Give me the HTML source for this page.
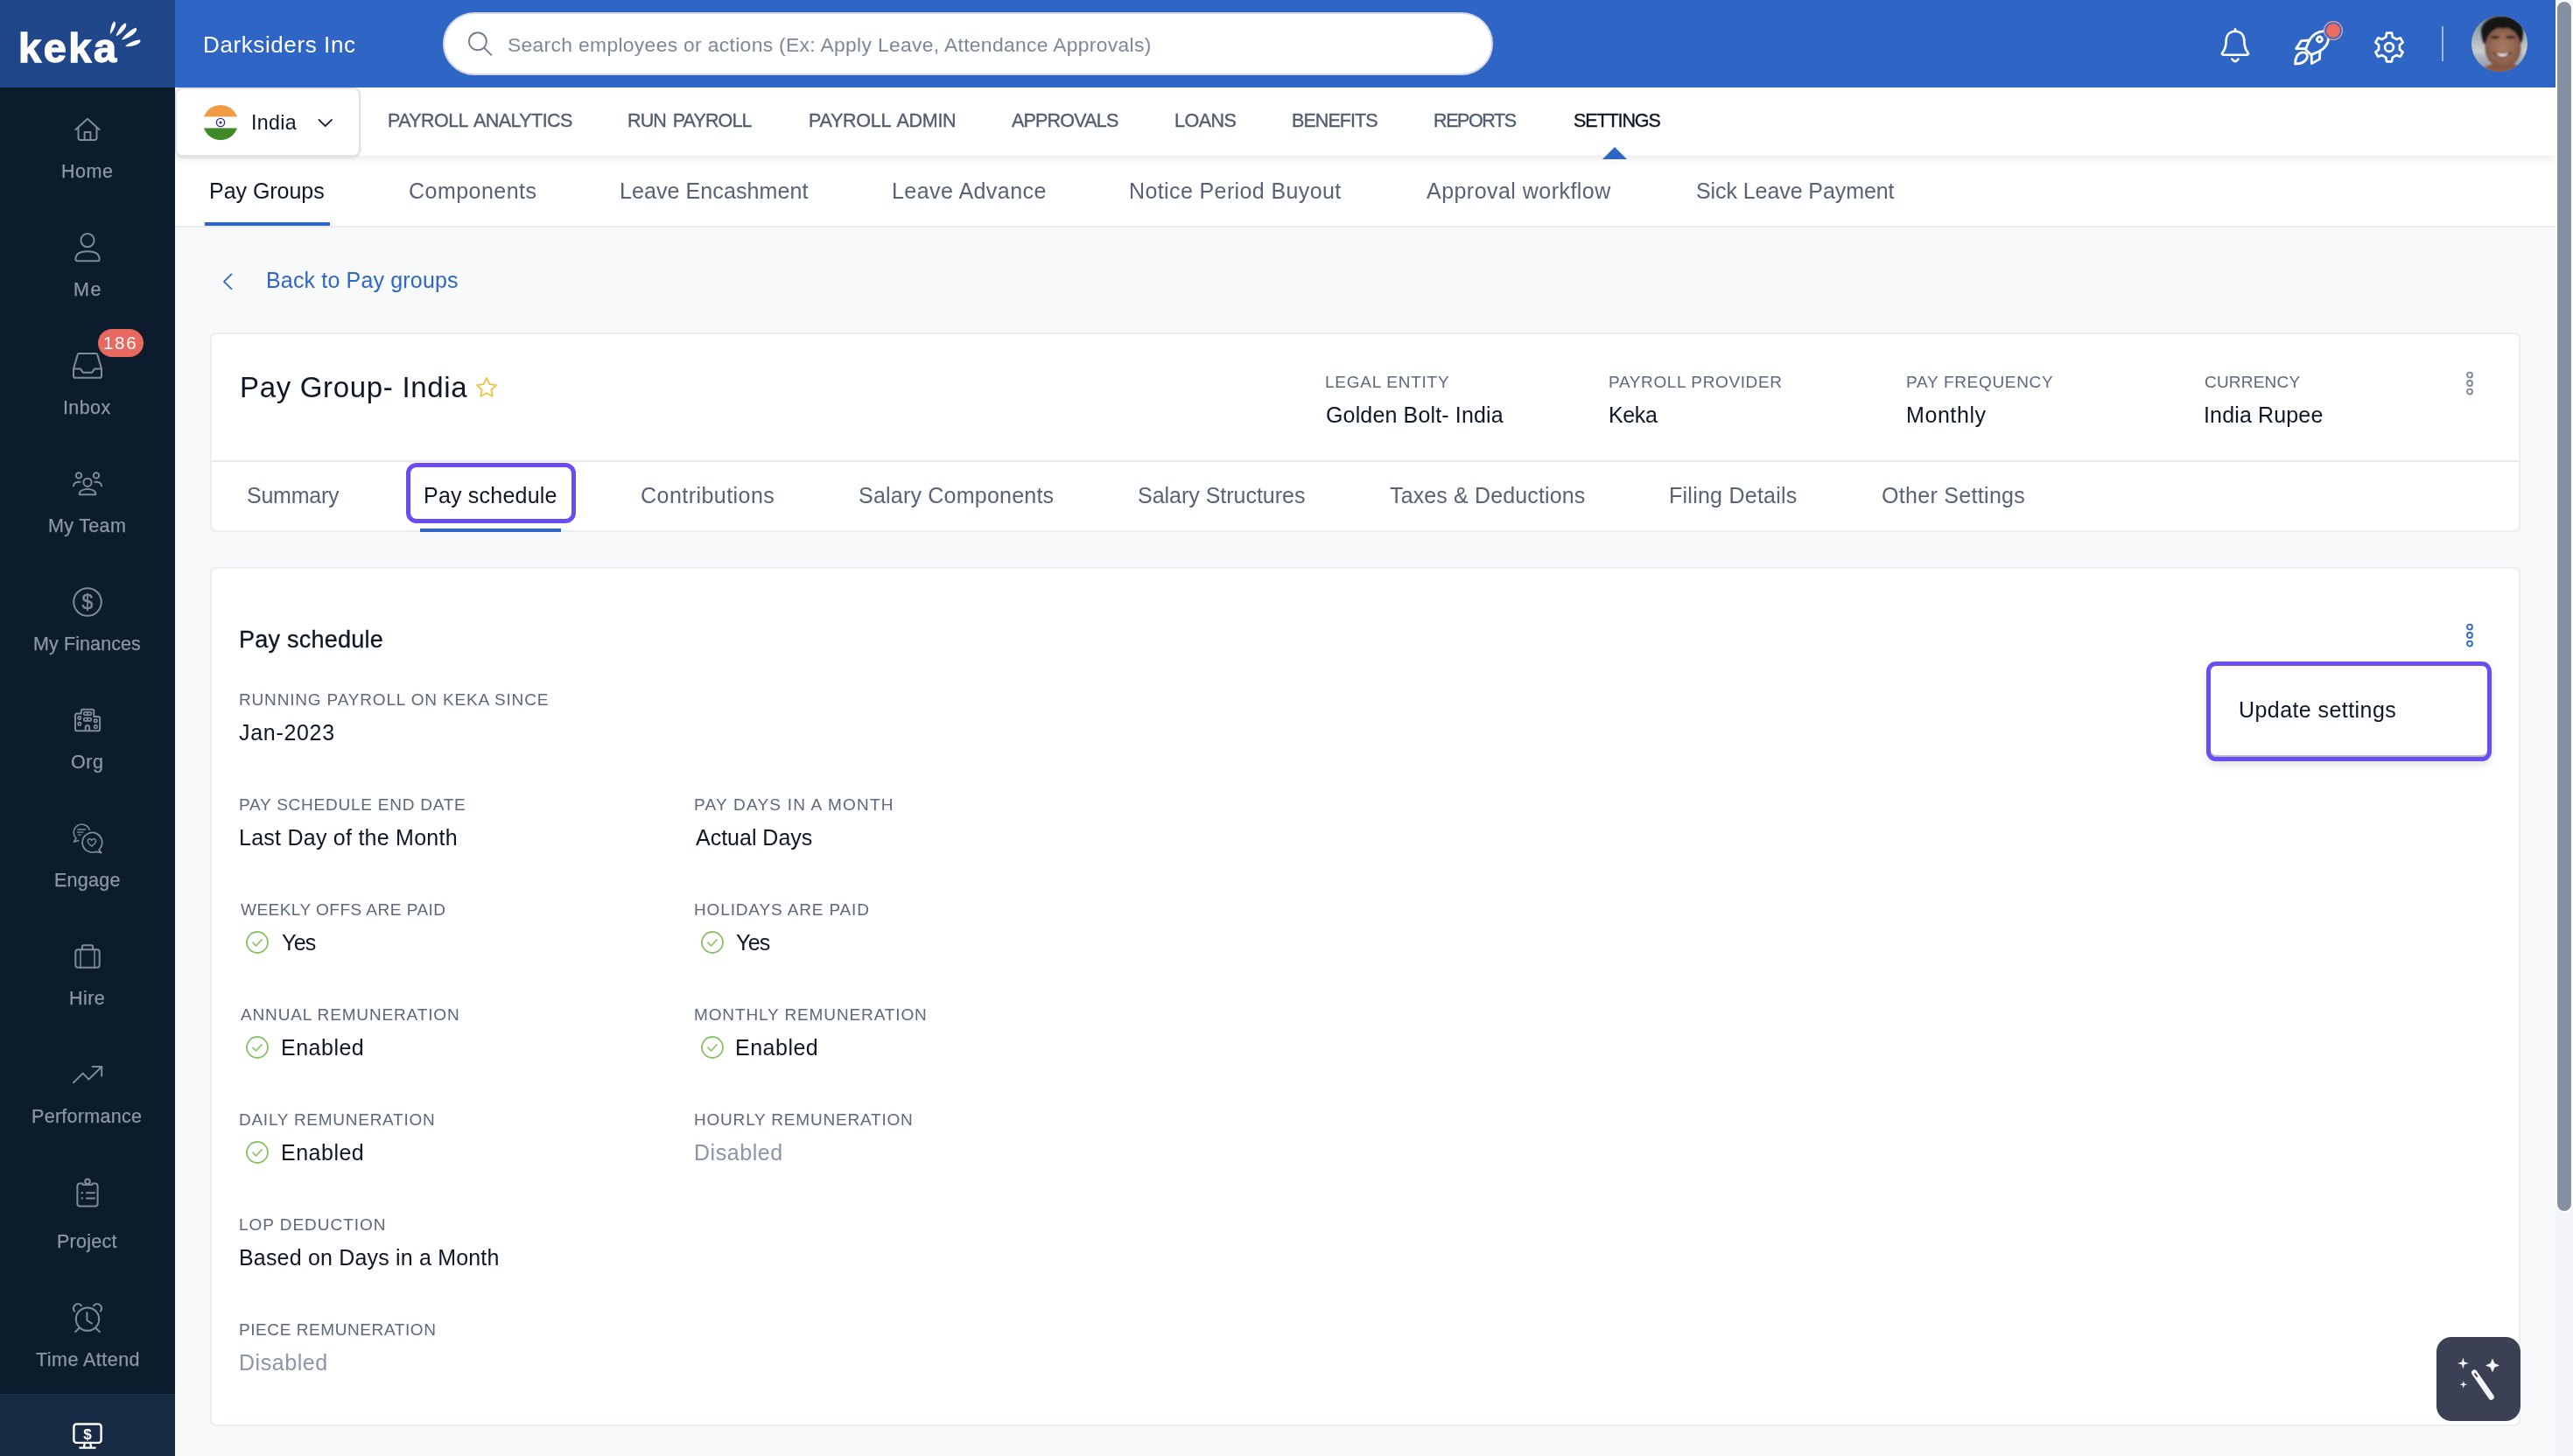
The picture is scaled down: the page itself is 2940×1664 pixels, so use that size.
<!DOCTYPE html>
<html lang="en"><head><meta charset="utf-8"><title>Keka - Pay Group India - Pay schedule</title>
<style>
*{box-sizing:border-box;margin:0;padding:0}
h1,h2{font-weight:400;font-size:inherit}
a{text-decoration:none;color:inherit}
html,body{width:2940px;height:1664px;overflow:hidden}
body{background:#f8f9fb;font-family:"Liberation Sans",sans-serif;position:relative;color:#0f1726}
@media (max-width:2000px){html{zoom:.5}}
.t{position:absolute;white-space:pre;display:block;will-change:transform}
.ic{position:absolute;display:block;will-change:transform}
.ic svg{display:block;width:100%;height:100%;overflow:visible}
.abs{position:absolute}
.sidebar{left:0;top:0;width:200px;height:1664px;background:#0d1c2c}
.logo-wrap{left:0;top:0;width:200px;height:100px;background:#20478a}
.nv{-webkit-text-stroke:0.35px currentColor}
.sd{-webkit-text-stroke:0.25px currentColor}
.hd{-webkit-text-stroke:0.3px currentColor}
.logo{-webkit-text-stroke:1.3px #fff}
.side-active{left:0;top:1593px;width:200px;height:71px;background:#182b45}
.badge{left:112px;top:376px;width:52px;height:32px;border-radius:16px;background:#e9685f}
.topbar{left:200px;top:0;width:2720px;height:100px;background:#2f66c6}
.search{left:306px;top:14px;width:1200px;height:72px;border-radius:36px;background:#fff;border:2px solid #d3d8e6}
.mainnav{left:200px;top:100px;width:2720px;height:78px;background:#fff;box-shadow:0 3px 10px rgba(10,15,25,.09)}
.country{left:-0.5px;top:-0.5px;width:212.5px;height:79.7px;background:#fff;border:2px solid #dfe2e8;border-radius:8px;box-shadow:0 1px 4px rgba(20,30,50,.10)}
.subtabs{left:200px;top:178px;width:2720px;height:82px;background:#fff;border-bottom:2px solid #e9ebee}
.uline{background:#2f66c6}
.card{background:#fff;border:2px solid #ebedf0;border-radius:7px}
.hl{border:5px solid #694df3;border-radius:12px;background:#fff}
.sb-track{left:2920px;top:0;width:20px;height:1664px;background:#f3f4f8}
.sb-thumb{left:0;top:0;width:20px;height:1386px;border:2px solid #fff;border-radius:10px;background:#8790a0}
.fab{left:2784px;top:1528px;width:96px;height:96px;border-radius:17px;background:#3b4054}
</style></head><body>

<main>
<div class="ic" style="left:254px;top:312px;width:12px;height:20px;"><svg viewBox="254 312 12 20" fill="none" stroke="#2f66c6" stroke-width="1.8" stroke-linecap="round" stroke-linejoin="round" ><path d="M264.4 313.4 L256 321.8 L264.4 330.2"/></svg></div>
<a class="backlink"><span class="t " style="left:303.5px;top:306px;font-size:25px;line-height:28px;letter-spacing:0.16px;color:#2f66c6;">Back to Pay groups</span></a>
<section class="abs card" style="left:240px;top:380px;width:2640px;height:228px">
<h1><span class="t " style="left:32.0px;top:42px;font-size:33px;line-height:37px;letter-spacing:0.68px;color:#0f1726;">Pay Group- India</span></h1>
<div class="ic" style="left:301.5px;top:47.80000000000001px;width:24px;height:23px;"><svg viewBox="543 430 25 24" fill="none" stroke="#efbf3e" stroke-width="1.8" stroke-linecap="round" stroke-linejoin="round" ><path d="M555.5 432 L559 439.6 L567 440.6 L561 446.2 L562.6 454 L555.5 450 L548.4 454 L550 446.2 L544 440.6 L552 439.6 Z"/></svg></div>
<span class="t " style="left:1271.5px;top:44px;font-size:19px;line-height:21px;letter-spacing:0.75px;color:#5d687a;">LEGAL ENTITY</span>
<span class="t " style="left:1272.5px;top:78px;font-size:25px;line-height:28px;letter-spacing:0.15px;color:#0f1726;">Golden Bolt- India</span>
<span class="t " style="left:1595.5px;top:44px;font-size:19px;line-height:21px;letter-spacing:0.62px;color:#5d687a;">PAYROLL PROVIDER</span>
<span class="t " style="left:1595.5px;top:78px;font-size:25px;line-height:28px;letter-spacing:-0.37px;color:#0f1726;">Keka</span>
<span class="t " style="left:1935.5px;top:44px;font-size:19px;line-height:21px;letter-spacing:0.69px;color:#5d687a;">PAY FREQUENCY</span>
<span class="t " style="left:1935.5px;top:78px;font-size:25px;line-height:28px;letter-spacing:0.58px;color:#0f1726;">Monthly</span>
<span class="t " style="left:2276.5px;top:44px;font-size:19px;line-height:21px;letter-spacing:0.21px;color:#5d687a;">CURRENCY</span>
<span class="t " style="left:2275.5px;top:78px;font-size:25px;line-height:28px;letter-spacing:0.15px;color:#0f1726;">India Rupee</span>
<div class="ic" style="left:2575px;top:42px;width:10px;height:28px;"><svg viewBox="0 0 10 28" fill="none" stroke="#7a8597" stroke-width="1.8" stroke-linecap="round" stroke-linejoin="round" ><circle cx="5" cy="4.6" r="3"/><circle cx="5" cy="14" r="3"/><circle cx="5" cy="23.6" r="3"/></svg></div>
<div class="abs" style="left:0;top:144px;width:2636px;height:2px;background:#e9ebef"></div>
<div class="abs hl" style="left:222px;top:147px;width:194px;height:69px"></div>
<span class="t " style="left:39.9px;top:170px;font-size:25px;line-height:28px;letter-spacing:-0.23px;color:#586375;">Summary</span>
<span class="t " style="left:241.5px;top:170px;font-size:25px;line-height:28px;letter-spacing:0.21px;color:#0f1726;">Pay schedule</span>
<span class="t " style="left:490.0px;top:170px;font-size:25px;line-height:28px;letter-spacing:0.46px;color:#586375;">Contributions</span>
<span class="t " style="left:738.5px;top:170px;font-size:25px;line-height:28px;letter-spacing:0.22px;color:#586375;">Salary Components</span>
<span class="t " style="left:1057.5px;top:170px;font-size:25px;line-height:28px;letter-spacing:-0.02px;color:#586375;">Salary Structures</span>
<span class="t " style="left:1346.1px;top:170px;font-size:25px;line-height:28px;letter-spacing:0.14px;color:#586375;">Taxes &amp; Deductions</span>
<span class="t " style="left:1665.0px;top:170px;font-size:25px;line-height:28px;letter-spacing:0.25px;color:#586375;">Filing Details</span>
<span class="t " style="left:1907.5px;top:170px;font-size:25px;line-height:28px;letter-spacing:0.31px;color:#586375;">Other Settings</span>
<div class="abs uline" style="left:238px;top:222px;width:161px;height:4px"></div>
</section>
<section class="abs card" style="left:240px;top:648px;width:2640px;height:982px">
<h2><span class="t hd" style="left:31.2px;top:66px;font-size:27px;line-height:30px;letter-spacing:0.25px;color:#0f1726;">Pay schedule</span></h2>
<div class="ic" style="left:2575px;top:62px;width:10px;height:28px;"><svg viewBox="0 0 10 28" fill="none" stroke="#2f66c6" stroke-width="1.8" stroke-linecap="round" stroke-linejoin="round" ><circle cx="5" cy="4.6" r="3"/><circle cx="5" cy="14" r="3"/><circle cx="5" cy="23.6" r="3"/></svg></div>
<div class="abs hl" style="left:2279px;top:106px;width:326px;height:114px;border-radius:11px;box-shadow:inset 0 -2px 1px rgba(80,80,95,.4),0 4px 10px rgba(20,30,60,.13)"></div>
<span class="t " style="left:2316.0px;top:147px;font-size:25px;line-height:28px;letter-spacing:0.43px;color:#0f1726;">Update settings</span>
<span class="t " style="left:31.2px;top:139px;font-size:19px;line-height:21px;letter-spacing:0.83px;color:#5d687a;">RUNNING PAYROLL ON KEKA SINCE</span>
<span class="t " style="left:31.3px;top:173px;font-size:25px;line-height:28px;letter-spacing:0.69px;color:#0f1726;">Jan-2023</span>
<span class="t " style="left:31.2px;top:259px;font-size:19px;line-height:21px;letter-spacing:0.76px;color:#5d687a;">PAY SCHEDULE END DATE</span>
<span class="t " style="left:31.2px;top:293px;font-size:25px;line-height:28px;letter-spacing:0.25px;color:#0f1726;">Last Day of the Month</span>
<span class="t " style="left:550.8px;top:259px;font-size:19px;line-height:21px;letter-spacing:1.22px;color:#5d687a;">PAY DAYS IN A MONTH</span>
<span class="t " style="left:552.8px;top:293px;font-size:25px;line-height:28px;letter-spacing:-0.01px;color:#0f1726;">Actual Days</span>
<span class="t " style="left:33.2px;top:379px;font-size:19px;line-height:21px;letter-spacing:0.48px;color:#5d687a;">WEEKLY OFFS ARE PAID</span>
<div class="ic" style="left:39.0px;top:414.0px;width:26px;height:26px;"><svg viewBox="0 0 26 26" fill="none" stroke="#88c269" stroke-width="1.8" stroke-linecap="round" stroke-linejoin="round" ><circle cx="13" cy="13" r="12"/><path d="M8 13.4 L11.6 17 L18.2 9.8" stroke-width="1.7"/></svg></div>
<span class="t " style="left:79.8px;top:413px;font-size:25px;line-height:28px;letter-spacing:-0.75px;color:#0f1726;">Yes</span>
<span class="t " style="left:550.8px;top:379px;font-size:19px;line-height:21px;letter-spacing:0.86px;color:#5d687a;">HOLIDAYS ARE PAID</span>
<div class="ic" style="left:558.5999999999999px;top:414.0px;width:26px;height:26px;"><svg viewBox="0 0 26 26" fill="none" stroke="#88c269" stroke-width="1.8" stroke-linecap="round" stroke-linejoin="round" ><circle cx="13" cy="13" r="12"/><path d="M8 13.4 L11.6 17 L18.2 9.8" stroke-width="1.7"/></svg></div>
<span class="t " style="left:599.4px;top:413px;font-size:25px;line-height:28px;letter-spacing:-0.75px;color:#0f1726;">Yes</span>
<span class="t " style="left:33.2px;top:499px;font-size:19px;line-height:21px;letter-spacing:0.85px;color:#5d687a;">ANNUAL REMUNERATION</span>
<div class="ic" style="left:39.0px;top:534.0px;width:26px;height:26px;"><svg viewBox="0 0 26 26" fill="none" stroke="#88c269" stroke-width="1.8" stroke-linecap="round" stroke-linejoin="round" ><circle cx="13" cy="13" r="12"/><path d="M8 13.4 L11.6 17 L18.2 9.8" stroke-width="1.7"/></svg></div>
<span class="t " style="left:78.8px;top:533px;font-size:25px;line-height:28px;letter-spacing:0.50px;color:#0f1726;">Enabled</span>
<span class="t " style="left:550.8px;top:499px;font-size:19px;line-height:21px;letter-spacing:0.88px;color:#5d687a;">MONTHLY REMUNERATION</span>
<div class="ic" style="left:558.5999999999999px;top:534.0px;width:26px;height:26px;"><svg viewBox="0 0 26 26" fill="none" stroke="#88c269" stroke-width="1.8" stroke-linecap="round" stroke-linejoin="round" ><circle cx="13" cy="13" r="12"/><path d="M8 13.4 L11.6 17 L18.2 9.8" stroke-width="1.7"/></svg></div>
<span class="t " style="left:598.4px;top:533px;font-size:25px;line-height:28px;letter-spacing:0.50px;color:#0f1726;">Enabled</span>
<span class="t " style="left:31.2px;top:619px;font-size:19px;line-height:21px;letter-spacing:0.74px;color:#5d687a;">DAILY REMUNERATION</span>
<div class="ic" style="left:39.0px;top:654.0px;width:26px;height:26px;"><svg viewBox="0 0 26 26" fill="none" stroke="#88c269" stroke-width="1.8" stroke-linecap="round" stroke-linejoin="round" ><circle cx="13" cy="13" r="12"/><path d="M8 13.4 L11.6 17 L18.2 9.8" stroke-width="1.7"/></svg></div>
<span class="t " style="left:78.8px;top:653px;font-size:25px;line-height:28px;letter-spacing:0.50px;color:#0f1726;">Enabled</span>
<span class="t " style="left:550.8px;top:619px;font-size:19px;line-height:21px;letter-spacing:0.80px;color:#5d687a;">HOURLY REMUNERATION</span>
<span class="t " style="left:550.8px;top:653px;font-size:25px;line-height:28px;letter-spacing:0.56px;color:#8b95a7;">Disabled</span>
<span class="t " style="left:31.2px;top:739px;font-size:19px;line-height:21px;letter-spacing:0.96px;color:#5d687a;">LOP DEDUCTION</span>
<span class="t " style="left:31.2px;top:773px;font-size:25px;line-height:28px;letter-spacing:0.18px;color:#0f1726;">Based on Days in a Month</span>
<span class="t " style="left:31.2px;top:859px;font-size:19px;line-height:21px;letter-spacing:0.58px;color:#5d687a;">PIECE REMUNERATION</span>
<span class="t " style="left:31.2px;top:893px;font-size:25px;line-height:28px;letter-spacing:0.56px;color:#8b95a7;">Disabled</span>
</section>
</main>
<div class="abs subtabs">
<span class="t " style="left:39.1px;top:26px;font-size:25px;line-height:28px;letter-spacing:-0.03px;color:#0f1726;">Pay Groups</span>
<span class="t " style="left:267.1px;top:26px;font-size:25px;line-height:28px;letter-spacing:0.47px;color:#586375;">Components</span>
<span class="t " style="left:508.4px;top:26px;font-size:25px;line-height:28px;letter-spacing:0.09px;color:#586375;">Leave Encashment</span>
<span class="t " style="left:819.2px;top:26px;font-size:25px;line-height:28px;letter-spacing:0.45px;color:#586375;">Leave Advance</span>
<span class="t " style="left:1090.4px;top:26px;font-size:25px;line-height:28px;letter-spacing:0.39px;color:#586375;">Notice Period Buyout</span>
<span class="t " style="left:1430.2px;top:26px;font-size:25px;line-height:28px;letter-spacing:0.46px;color:#586375;">Approval workflow</span>
<span class="t " style="left:1738.1px;top:26px;font-size:25px;line-height:28px;letter-spacing:-0.08px;color:#586375;">Sick Leave Payment</span>
<div class="abs uline" style="left:34px;top:76px;width:143px;height:4px"></div>
</div>
<nav class="abs mainnav">
<div class="abs country"></div>
<div class="ic" style="left:32px;top:20px;width:40px;height:40px;"><svg viewBox="0 0 40 40"><defs><clipPath id="fc"><circle cx="20" cy="20" r="20"/></clipPath></defs><g clip-path="url(#fc)"><rect width="40" height="13.6" fill="#f19b45"/><rect y="13.6" width="40" height="12.8" fill="#ffffff"/><rect y="26.4" width="40" height="13.6" fill="#3f8a27"/><circle cx="20" cy="20" r="4.6" fill="none" stroke="#2a2f93" stroke-width="1.4"/><circle cx="20" cy="20" r="1.6" fill="#2a2f93"/></g></svg></div>
<span class="t " style="left:87.0px;top:27px;font-size:23.2px;line-height:26px;letter-spacing:0.35px;color:#0f1726;">India</span>
<div class="ic" style="left:164px;top:35px;width:16px;height:10px;"><svg viewBox="364 135 16 10" fill="none" stroke="#1a2233" stroke-width="1.8" stroke-linecap="round" stroke-linejoin="round" ><path d="M364.4 136.9 L371.7 144 L379 136.9"/></svg></div>
<span class="t nv" style="left:242.7px;top:26px;font-size:21.5px;line-height:24px;letter-spacing:-0.57px;color:#525d70;word-spacing:2.6px;">PAYROLL ANALYTICS</span>
<span class="t nv" style="left:517.3px;top:26px;font-size:21.5px;line-height:24px;letter-spacing:-0.87px;color:#525d70;word-spacing:2.6px;">RUN PAYROLL</span>
<span class="t nv" style="left:723.8px;top:26px;font-size:21.5px;line-height:24px;letter-spacing:-0.27px;color:#525d70;word-spacing:2.6px;">PAYROLL ADMIN</span>
<span class="t nv" style="left:956.2px;top:26px;font-size:21.5px;line-height:24px;letter-spacing:-0.80px;color:#525d70;word-spacing:2.6px;">APPROVALS</span>
<span class="t nv" style="left:1141.6px;top:26px;font-size:21.5px;line-height:24px;letter-spacing:-0.52px;color:#525d70;word-spacing:2.6px;">LOANS</span>
<span class="t nv" style="left:1276.0px;top:26px;font-size:21.5px;line-height:24px;letter-spacing:-0.94px;color:#525d70;word-spacing:2.6px;">BENEFITS</span>
<span class="t nv" style="left:1438.0px;top:26px;font-size:21.5px;line-height:24px;letter-spacing:-1.40px;color:#525d70;word-spacing:2.6px;">REPORTS</span>
<span class="t nv" style="left:1597.8px;top:26px;font-size:21.5px;line-height:24px;letter-spacing:-1.10px;color:#0f1726;word-spacing:2.6px;">SETTINGS</span>
<div class="ic" style="left:1631px;top:68px;width:28px;height:14px;"><svg viewBox="0 0 28 14"><path d="M14 0 L28 14 H0 Z" fill="#2f66c6"/></svg></div>
</nav>
<header class="abs topbar">
<span class="t " style="left:31.5px;top:36px;font-size:26px;line-height:30px;letter-spacing:0.60px;color:#ffffff;">Darksiders Inc</span>
<div class="abs search"></div>
<div class="ic" style="left:335px;top:37px;width:28px;height:28px;"><svg viewBox="535 37 28 28" fill="none" stroke="#717d90" stroke-width="1.9" stroke-linecap="round" stroke-linejoin="round" ><circle cx="545.9" cy="47.3" r="10"/><path d="M553.2 54.6 L561.4 62.8"/></svg></div>
<span class="t " style="left:379.8px;top:38px;font-size:22.8px;line-height:26px;letter-spacing:0.35px;color:#7d8797;">Search employees or actions (Ex: Apply Leave, Attendance Approvals)</span>
<div class="ic" style="left:2337px;top:31px;width:34px;height:42px;"><svg viewBox="2537 31 34 42" fill="none" stroke="#ffffff" stroke-width="2.6" stroke-linecap="round" stroke-linejoin="round" ><path d="M2554 33.4 V35.6"/><path d="M2554 35.8 C2547 35.8 2543.6 41 2543.6 47.4 C2543.6 54 2541.6 57.6 2539.2 60.6 Q2538.4 62.6 2540.6 62.8 H2567.4 Q2569.6 62.6 2568.8 60.6 C2566.4 57.6 2564.4 54 2564.4 47.4 C2564.4 41 2561 35.8 2554 35.8 Z"/><path d="M2550.4 67.6 Q2554 72.6 2557.6 67.6"/></svg></div>
<div class="ic" style="left:2421px;top:33px;width:42px;height:42px;"><svg viewBox="2621 33 42 42" fill="none" stroke="#ffffff" stroke-width="2.8" stroke-linecap="round" stroke-linejoin="round" ><path d="M2655 35.6 C2647 36 2641.6 40.6 2638 47.6 L2634.4 56.4 L2640.6 62.6 L2649.4 59 C2656.4 55.4 2661 49.2 2660.6 41.6"/><circle cx="2650.4" cy="45" r="3"/><path d="M2639 46 L2629.6 46.6 L2623.6 55.6 L2634.4 55.6"/><path d="M2651 58.4 L2650.4 67.6 L2641.4 72.6 L2641.2 62.6"/><path d="M2622.6 73 C2622.4 66 2625.4 60.4 2631 59.8 C2635.4 59.6 2637.4 63 2636 66.4 C2634 71 2629 73 2622.6 73 Z"/></svg></div>
<div class="ic" style="left:2454px;top:22.8px;width:24px;height:24px;"><svg viewBox="0 0 24 24"><circle cx="12" cy="12" r="10.4" fill="#2f66c6" stroke="#e7a1a4" stroke-width="1.3"/><circle cx="12" cy="12" r="8" fill="#eb6a62"/></svg></div>
<div class="ic" style="left:2512px;top:36px;width:36px;height:36px;"><svg viewBox="2712 36 36 36" fill="none" stroke="#ffffff" stroke-width="2.7" stroke-linecap="round" stroke-linejoin="round" ><path d="M2726.2 42.4 L2727.1 37.7 L2732.9 37.7 L2733.8 42.4 L2738.2 44.9 L2742.7 43.3 L2745.6 48.4 L2741.9 51.5 L2741.9 56.5 L2745.6 59.6 L2742.7 64.7 L2738.2 63.1 L2733.8 65.6 L2732.9 70.3 L2727.1 70.3 L2726.2 65.6 L2721.8 63.1 L2717.3 64.7 L2714.4 59.6 L2718.1 56.5 L2718.1 51.5 L2714.4 48.4 L2717.3 43.3 L2721.8 44.9 Z"/><circle cx="2730" cy="54" r="4.9"/></svg></div>
<div class="abs" style="left:2590px;top:30px;width:2px;height:40px;background:#9db6e6"></div>
<div class="ic" style="left:2624px;top:17.6px;width:64px;height:64px;"><svg viewBox="0 0 64 64"><defs><clipPath id="av"><circle cx="32" cy="32" r="32"/></clipPath><filter id="bl" x="-20%" y="-20%" width="140%" height="140%"><feGaussianBlur stdDeviation="1.1"/></filter><radialGradient id="sk" cx="50%" cy="48%" r="62%"><stop offset="0" stop-color="#a87b63"/><stop offset="0.6" stop-color="#8f634f"/><stop offset="1" stop-color="#6f4a3c"/></radialGradient><linearGradient id="bgv" x1="0" y1="0" x2="0" y2="1"><stop offset="0" stop-color="#7c8893"/><stop offset="0.4" stop-color="#a9b3ba"/><stop offset="0.62" stop-color="#c6ccd1"/><stop offset="0.8" stop-color="#a3adb5"/><stop offset="1" stop-color="#8b949c"/></linearGradient></defs><g clip-path="url(#av)"><rect width="64" height="64" fill="url(#bgv)"/><g filter="url(#bl)"><ellipse cx="36" cy="68" rx="27" ry="14" fill="#8c5943"/><ellipse cx="35" cy="17.5" rx="24" ry="17" fill="#121316"/><path d="M11.5 16 C11 24 12.5 30 15.5 33 L19 24 Z M58.8 16 C59.4 24 58 30 55.4 33 L52 24 Z" fill="#16171a"/><ellipse cx="36" cy="36.5" rx="20.5" ry="23.5" fill="url(#sk)"/><path d="M17 20 C22 13 30 13.5 36 14.5 C43 13 51 13.5 55 20 C52 9 44 6 36 6 C27 6 20 9 17 20 Z" fill="#121316"/><ellipse cx="27" cy="24.6" rx="5.2" ry="1.7" fill="#2e201c"/><ellipse cx="44.6" cy="24.6" rx="5.6" ry="1.7" fill="#2e201c"/><path d="M24 41 C28 50 42 50 46.5 41 C42 44 28 44 24 41 Z" fill="#5e3a30"/><path d="M28.4 42.8 C32 44 39 44 42.4 42.8 C40.6 47.6 30.4 47.6 28.4 42.8 Z" fill="#f6f2ee"/></g></g></svg></div>
</header>
<aside class="abs sidebar">
<div class="abs logo-wrap">
<span class="t logo" style="left:21.2px;top:28px;font-size:47px;line-height:53px;letter-spacing:2.53px;color:#ffffff;font-weight:700;">keka</span>
<div class="ic" style="left:122px;top:22px;width:42px;height:36px;"><svg viewBox="122 22 42 36" fill="#ffffff" stroke="#ffffff" stroke-width="1.2" stroke-linecap="round" stroke-linejoin="round" ><path d="M126.4 38 C126.8 33 128.4 27.6 130.4 25 C132.4 26 131.2 32 126.4 38 Z"/><path d="M133.2 40.4 C135.4 35.4 139.6 29 143 27 C145.4 29.4 140.4 36.4 133.2 40.4 Z"/><path d="M139.8 45 C143.4 40 150.6 33.6 155.2 32.4 C157.2 35.6 149.4 42 139.8 45 Z"/><path d="M144 52.6 C148 49.4 155.6 46 159.8 46.2 C160.6 49.6 152.6 52.4 144 52.6 Z"/></svg></div>
</div>
<div class="abs side-active"></div>
<div class="ic" style="left:85px;top:134px;width:30px;height:28px;"><svg viewBox="85 134 30 28" fill="none" stroke="#7f8a9b" stroke-width="2" stroke-linecap="round" stroke-linejoin="round" ><path d="M86.3 148.2 L100 135.8 L113.7 148.2"/><path d="M89.5 146 V157.2 Q89.5 160 92.3 160 H107.7 Q110.5 160 110.5 157.2 V146"/><path d="M96.6 160 V151 H103.4 V160"/></svg></div>
<span class="t sd" style="left:69.8px;top:184px;font-size:21.5px;line-height:24px;letter-spacing:0.57px;color:#8c97a8;">Home</span>
<div class="ic" style="left:85px;top:266px;width:30px;height:33px;"><svg viewBox="85 266 30 33" fill="none" stroke="#7f8a9b" stroke-width="2" stroke-linecap="round" stroke-linejoin="round" ><circle cx="100" cy="274.6" r="7.6"/><path d="M86.4 296.2 C86.4 290 92 287.2 100 287.2 C108 287.2 113.6 290 113.6 296.2 Q113.6 298.2 111.6 298.2 H88.4 Q86.4 298.2 86.4 296.2 Z"/></svg></div>
<span class="t sd" style="left:83.7px;top:319px;font-size:21.5px;line-height:24px;letter-spacing:1.60px;color:#8c97a8;">Me</span>
<div class="ic" style="left:83px;top:403px;width:34px;height:30px;"><svg viewBox="83 403 34 30" fill="none" stroke="#7f8a9b" stroke-width="2" stroke-linecap="round" stroke-linejoin="round" ><path d="M84 421.6 L88.6 405.6 Q89 404 90.6 404 H109.4 Q111 404 111.4 405.6 L116 421.6"/><path d="M84 421.6 H92 L95 425.8 H105 L108 421.6 H116 V429.4 Q116 431.8 113.6 431.8 H86.4 Q84 431.8 84 429.4 Z"/></svg></div>
<span class="t sd" style="left:72.4px;top:454px;font-size:21.5px;line-height:24px;letter-spacing:0.40px;color:#8c97a8;">Inbox</span>
<div class="ic" style="left:83px;top:539px;width:34px;height:27px;"><svg viewBox="83 539 34 27" fill="none" stroke="#7f8a9b" stroke-width="2" stroke-linecap="round" stroke-linejoin="round" ><circle cx="100" cy="551.3" r="4.6"/><path d="M90.6 565.2 C90.6 561 95 559 100 559 C105 559 109.4 561 109.4 565.2 Z"/><circle cx="90" cy="543.4" r="3.2"/><circle cx="110" cy="543.4" r="3.2"/><path d="M84 555.4 C84 552 87 550.6 91.6 550.8"/><path d="M116 555.4 C116 552 113 550.6 108.4 550.8"/></svg></div>
<span class="t sd" style="left:55.0px;top:589px;font-size:21.5px;line-height:24px;letter-spacing:0.33px;color:#8c97a8;">My Team</span>
<div class="ic" style="left:83px;top:671px;width:34px;height:34px;"><svg viewBox="83 671 34 34" fill="none" stroke="#7f8a9b" stroke-width="2" stroke-linecap="round" stroke-linejoin="round" ><circle cx="100" cy="688" r="15.8"/><text x="100" y="696.2" text-anchor="middle" font-family="Liberation Sans, sans-serif" font-size="23" fill="#7f8a9b" stroke="#7f8a9b" stroke-width="0.5">$</text></svg></div>
<span class="t sd" style="left:38.0px;top:724px;font-size:21.5px;line-height:24px;letter-spacing:0.10px;color:#8c97a8;">My Finances</span>
<div class="ic" style="left:85px;top:809px;width:30px;height:28px;"><svg viewBox="85 809 30 28" fill="none" stroke="#7f8a9b" stroke-width="2" stroke-linecap="round" stroke-linejoin="round" ><path d="M86 817.4 Q86 815.4 88 815.4 H92.8 V812.7 Q92.8 810.7 94.8 810.7 H105.3 Q107.3 810.7 107.3 812.7 V818.9 H112.1 Q114.1 818.9 114.1 820.9 V833.2 Q114.1 835.2 112.1 835.2 H88 Q86 835.2 86 833.2 Z"/><path d="M97.7 835.2 V831.4 Q97.7 828.9 99.9 828.9 Q102.1 828.9 102.1 831.4 V835.2"/><g stroke-width="1.7"><rect x="95.85" y="813.95" width="8.4" height="3.1" rx="1"/><rect x="95.85" y="820.65" width="8.4" height="3.2" rx="1"/><path d="M100.05 814 V817 M100.05 820.7 V823.8"/><rect x="89.25" y="818.95" width="3.1" height="3.1" rx="0.8"/><rect x="89.25" y="825.55" width="3.1" height="3.3" rx="0.8"/><rect x="107.7" y="822.15" width="3.2" height="3.3" rx="0.8"/><rect x="107.7" y="828.95" width="3.2" height="3.3" rx="0.8"/></g></svg></div>
<span class="t sd" style="left:81.4px;top:859px;font-size:21.5px;line-height:24px;letter-spacing:0.60px;color:#8c97a8;">Org</span>
<div class="ic" style="left:82px;top:941px;width:36px;height:35px;"><svg viewBox="82 940 36 36" fill="none" stroke="#7f8a9b" stroke-width="2" stroke-linecap="round" stroke-linejoin="round" ><path d="M102.4 947.6 A9.6 9.6 0 1 0 86.6 957.6 L84 961.8 L89.6 960" stroke-width="1.6"/><path d="M88.6 947.2 H97.6 M88 950.4 H95 M89 953.6 H92" stroke-width="1.3"/><path d="M113.4 971 A11.6 11.6 0 1 0 109.4 973.4 L116.2 974.6 Z" stroke-width="1.8"/><path d="M105 966.8 C101 964 99.6 961.8 100.4 959.8 C101.2 957.8 103.8 957.8 105 960 C106.2 957.8 108.8 957.8 109.6 959.8 C110.4 961.8 109 964 105 966.8 Z" stroke-width="1.5"/></svg></div>
<span class="t sd" style="left:61.8px;top:994px;font-size:21.5px;line-height:24px;letter-spacing:0.26px;color:#8c97a8;">Engage</span>
<div class="ic" style="left:85px;top:1079px;width:30px;height:28px;"><svg viewBox="85 1079 30 28" fill="none" stroke="#7f8a9b" stroke-width="2" stroke-linecap="round" stroke-linejoin="round" ><rect x="86.3" y="1085.2" width="27.4" height="20.6" rx="3"/><path d="M94 1085.2 V1082 Q94 1080.2 95.8 1080.2 H104.2 Q106 1080.2 106 1082 V1085.2"/><path d="M92 1085.2 V1105.8 M108 1085.2 V1105.8" stroke-width="1.6"/></svg></div>
<span class="t sd" style="left:78.8px;top:1129px;font-size:21.5px;line-height:24px;letter-spacing:0.47px;color:#8c97a8;">Hire</span>
<div class="ic" style="left:83px;top:1217px;width:34px;height:22px;"><svg viewBox="83 1217 34 22" fill="none" stroke="#7f8a9b" stroke-width="2" stroke-linecap="round" stroke-linejoin="round" ><path d="M84 1237.2 L94.8 1226.6 L101.4 1233.6 L116 1219.2"/><path d="M105.6 1219 H116.2 V1229.8"/></svg></div>
<span class="t sd" style="left:36.3px;top:1264px;font-size:21.5px;line-height:24px;letter-spacing:0.29px;color:#8c97a8;">Performance</span>
<div class="ic" style="left:87px;top:1346px;width:26px;height:34px;"><svg viewBox="87 1346 26 34" fill="none" stroke="#7f8a9b" stroke-width="2" stroke-linecap="round" stroke-linejoin="round" ><path d="M94.4 1352.4 H91.4 Q88.4 1352.4 88.4 1355.4 V1375.4 Q88.4 1378.4 91.4 1378.4 H108.6 Q111.6 1378.4 111.6 1375.4 V1355.4 Q111.6 1352.4 108.6 1352.4 H105.6"/><circle cx="100" cy="1350.2" r="2.8"/><path d="M94.6 1354 H105.4"/><path d="M99 1363.2 H108 M99 1369.4 H108"/><circle cx="93.8" cy="1363.2" r="1.2" fill="#7f8a9b" stroke="none"/><circle cx="93.8" cy="1369.4" r="1.2" fill="#7f8a9b" stroke="none"/></svg></div>
<span class="t sd" style="left:65.1px;top:1407px;font-size:21.5px;line-height:24px;letter-spacing:0.27px;color:#8c97a8;">Project</span>
<div class="ic" style="left:83px;top:1489px;width:34px;height:34px;"><svg viewBox="83 1489 34 34" fill="none" stroke="#7f8a9b" stroke-width="2" stroke-linecap="round" stroke-linejoin="round" ><circle cx="100" cy="1507.6" r="13.2"/><path d="M99.4 1500 V1509 L104.8 1512.4"/><path d="M85 1498.4 A5 5 0 0 1 93 1492.2 M115 1498.4 A5 5 0 0 0 107 1492.2"/><path d="M90.4 1518 L86.2 1522 M109.6 1518 L113.8 1522"/></svg></div>
<span class="t sd" style="left:40.9px;top:1542px;font-size:21.5px;line-height:24px;letter-spacing:0.46px;color:#8c97a8;">Time Attend</span>
<div class="abs badge"></div>
<span class="t " style="left:118.0px;top:380px;font-size:20.5px;line-height:23px;letter-spacing:1.70px;color:#ffffff;">186</span>
<div class="ic" style="left:83px;top:1626px;width:34px;height:32px;"><svg viewBox="83 1626 34 32" fill="none" stroke="#ffffff" stroke-width="2.4" stroke-linecap="round" stroke-linejoin="round" ><rect x="84.4" y="1627.5" width="31.2" height="21.4" rx="3"/><path d="M96.8 1649 L95.8 1654.4 M103.2 1649 L104.2 1654.4 M91.4 1654.6 H108.6"/><text x="100" y="1644.6" text-anchor="middle" font-family="Liberation Sans, sans-serif" font-weight="700" font-size="17" fill="#fff" stroke="none">$</text></svg></div>
</aside>
<div class="abs sb-track"><div class="abs sb-thumb"></div></div>
<div class="abs fab"><svg viewBox="0 0 96 96" width="96" height="96" style="display:block"><path d="M43.4 40.8 L62.6 68.6" stroke="#f4f5f8" stroke-width="6.6" stroke-linecap="round"/><path d="M44 42 L46.2 45" stroke="#3b4054" stroke-width="2" stroke-linecap="round"/><path d="M30.4 23.6 L31.8 28.6 L36.8 30 L31.8 31.4 L30.4 36.4 L29 31.4 L24 30 L29 28.6 Z" fill="#f4f5f8"/><path d="M64 24.4 L66.4 30 L72 32.4 L66.4 34.8 L64 40.4 L61.6 34.8 L56 32.4 L61.6 30 Z" fill="#f4f5f8"/><path d="M30.8 50 L31.8 53.2 L35 54.2 L31.8 55.2 L30.8 58.4 L29.8 55.2 L26.6 54.2 L29.8 53.2 Z" fill="#f4f5f8"/></svg></div>
</body></html>
